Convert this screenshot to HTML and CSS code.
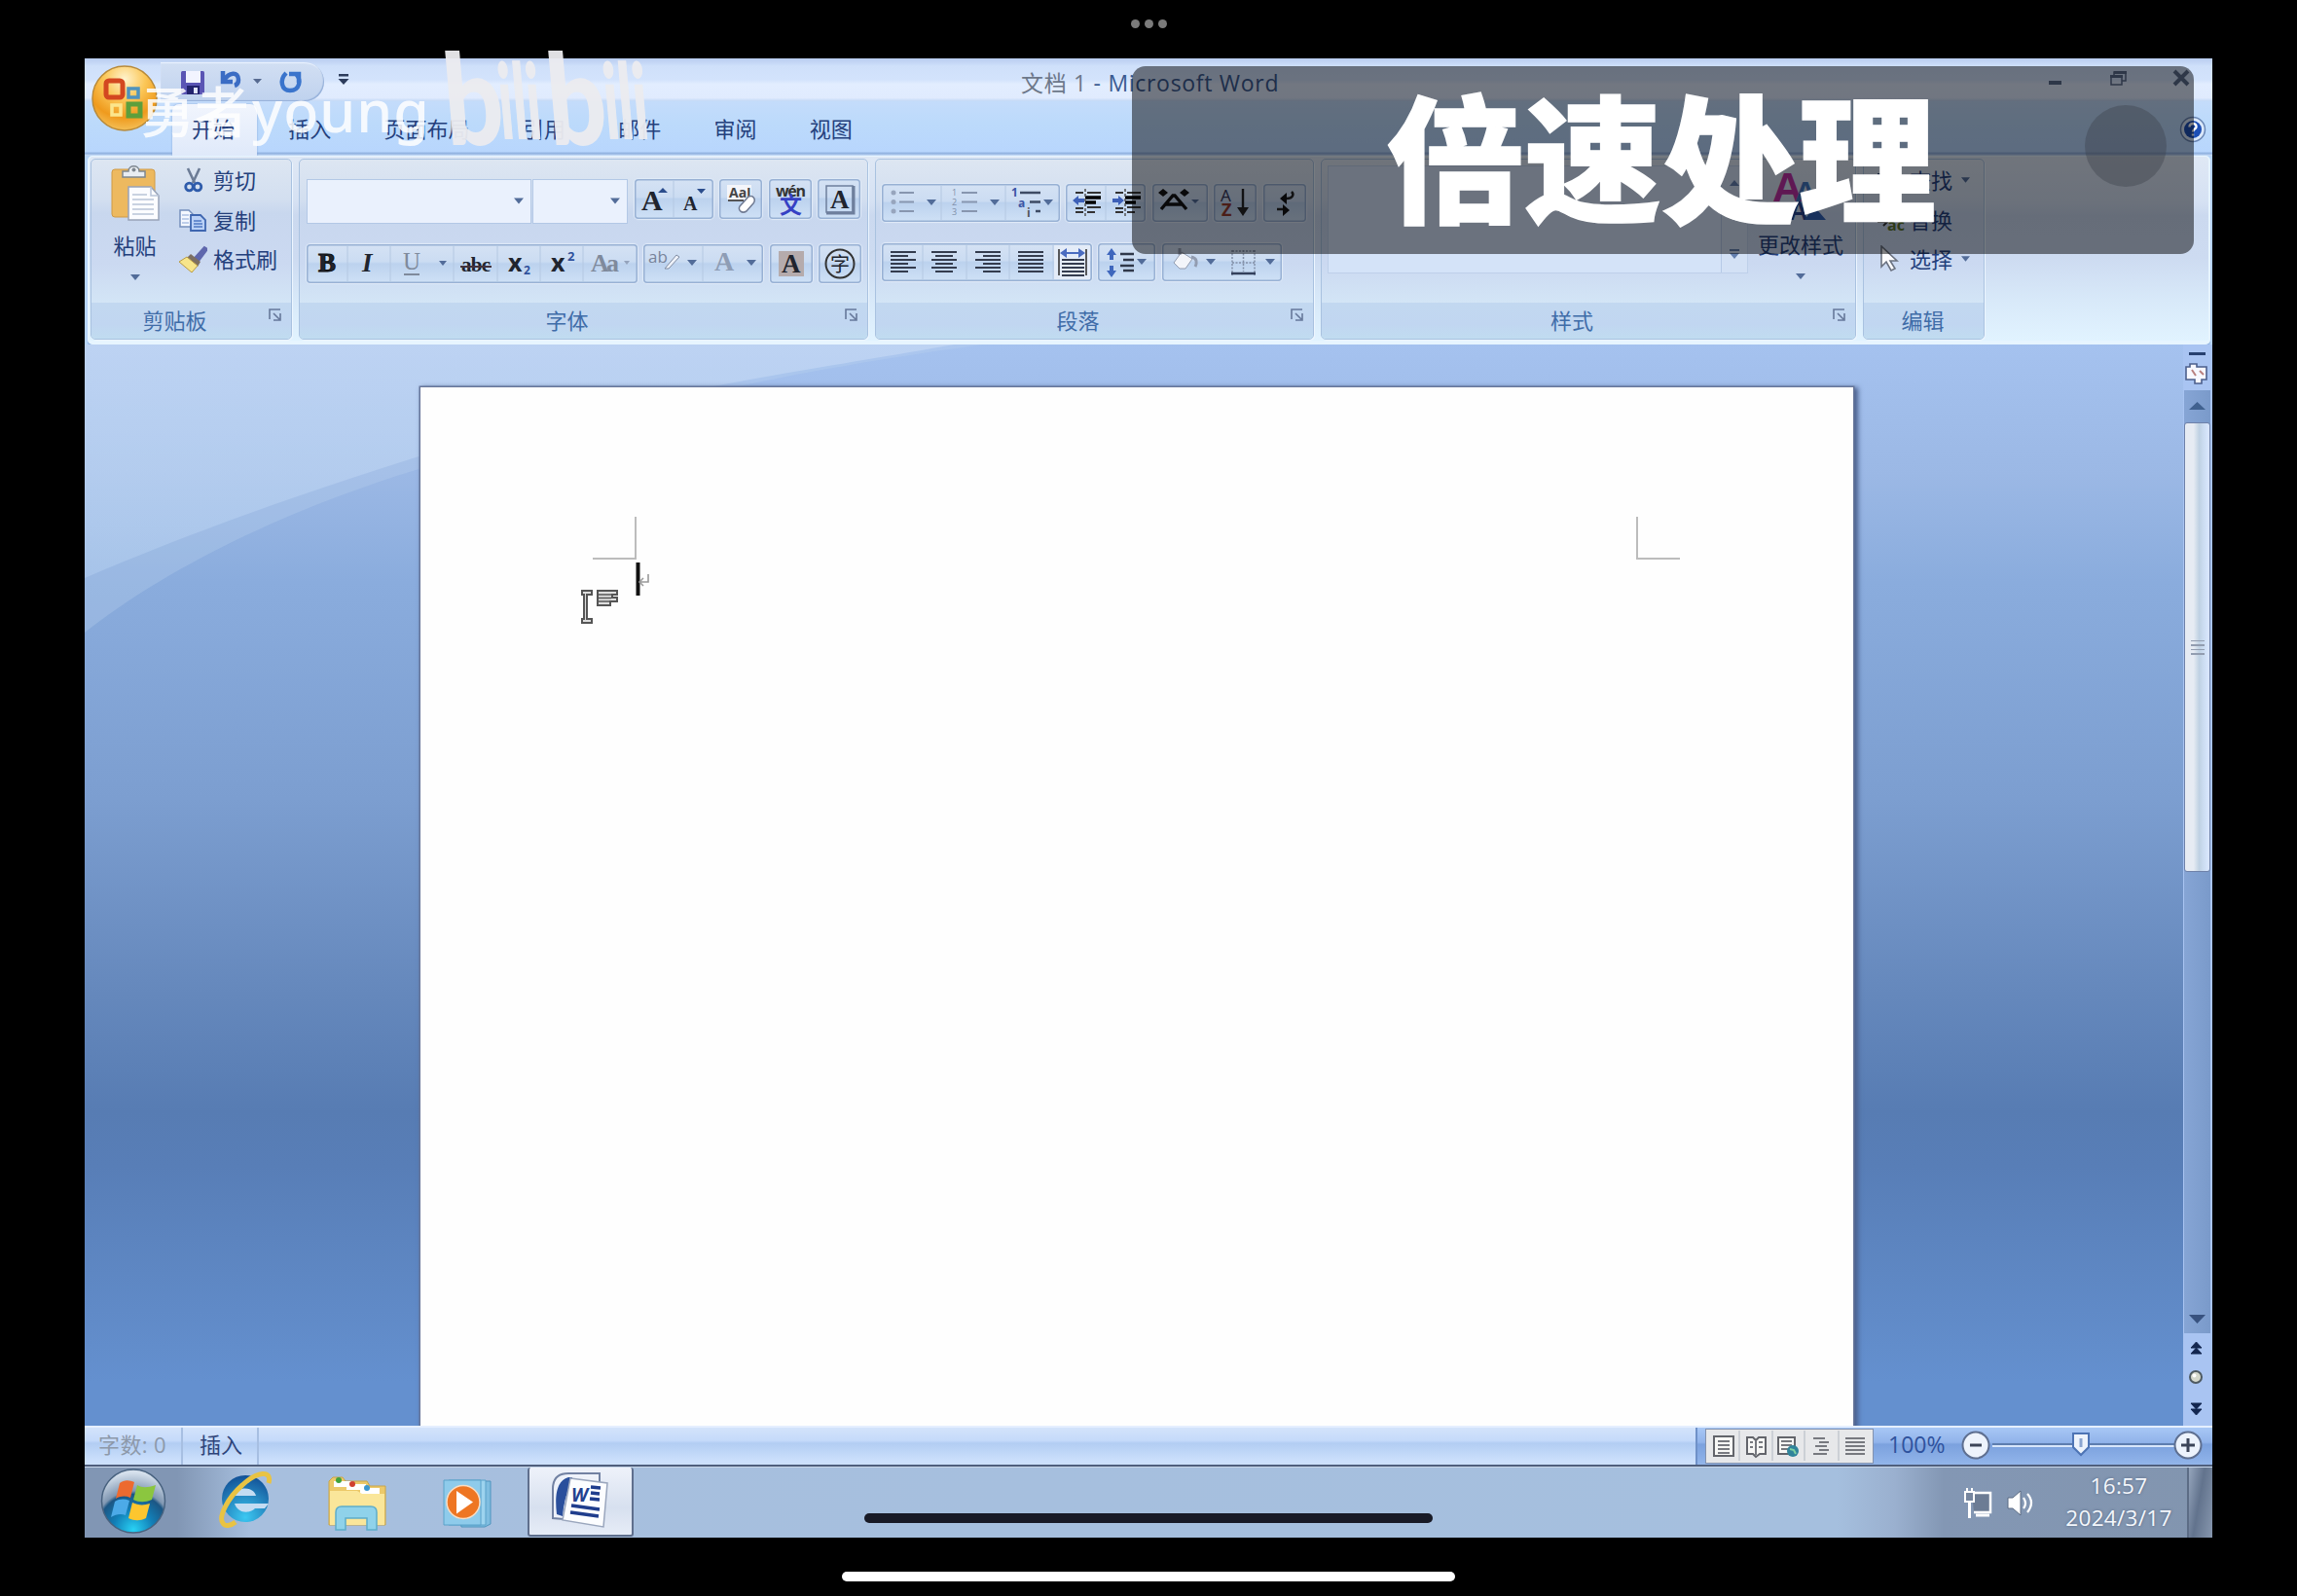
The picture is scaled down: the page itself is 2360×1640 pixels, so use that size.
FILE: index.html
```html
<!DOCTYPE html>
<html lang="zh-CN">
<head>
<meta charset="utf-8">
<title>文档 1 - Microsoft Word</title>
<link rel="stylesheet" href="styles.css">
</head>
<body>
<div class="tablet-top"><i></i><i></i><i></i></div>

<main class="desktop">
  <header class="titlebar">
    <div class="qat">
      <svg viewBox="165 64 168 40" width="168" height="40">
        <rect x="186" y="73" width="24" height="24" rx="1.5" fill="#5a55b4"/><rect x="191" y="73" width="15" height="12" fill="#f2f4ff"/><rect x="192" y="88" width="13" height="9" fill="#23246e"/><rect x="199" y="90" width="4" height="6" fill="#dfe4ff"/>
        <path d="M229 73v11h10M230 83c5-9 15-10 15-1 0 3-1 5-4 6" fill="none" stroke="#3a6cc4" stroke-width="4.5"/>
        <path d="M260 81h9l-4.500 5z" fill="#566a90"/>
        <path d="M294 75c-7 7-5 18 4 18 10 0 12-11 6-17M297 76h10v9" fill="none" stroke="#3a74cc" stroke-width="4.500"/>
      </svg>
    </div>
    <svg class="qat-more" viewBox="346 74 14 16" width="14" height="16"><path d="M348 77h10v2.500h-10zM347.500 82h11l-5.500 6z" fill="#2d3c5c"/></svg>
    <h1 class="title"><span>文档 1</span> - Microsoft Word</h1>
    <svg class="winbtns" viewBox="2100 68 155 24" width="155" height="24">
      <path d="M2105 83h13v4h-13z" fill="#5b6c8c"/>
      <path d="M2169 79h11v8h-11zM2172 78v-4h12v9h-4" fill="none" stroke="#5b6c8c" stroke-width="1.500"/><path d="M2168 77h13v3h-13zM2172 73h13v3h-13z" fill="#5b6c8c"/>
      <path d="M2234 73l14 14M2248 73l-14 14" stroke="#5b6c8c" stroke-width="4"/>
    </svg>
  </header>

  <nav class="tabs">
    <span class="tab active">开始</span><span class="tab">插入</span><span class="tab">页面布局</span><span class="tab">引用</span><span class="tab">邮件</span><span class="tab">审阅</span><span class="tab">视图</span>
    <svg class="help" viewBox="0 0 28 28" width="28" height="28"><circle cx="14" cy="14" r="12.500" fill="#dbe8fa" stroke="#6a86b4" stroke-width="1.500"/><circle cx="14" cy="14" r="9" fill="#1d4fb5"/><path d="M10.500 11.500c0-5 7.500-4.500 7 0-.3 2-3.500 2.500-3.500 5M14 18.500v2" stroke="#fff" stroke-width="2.400" fill="none"/></svg>
  </nav>

  <section class="ribbon">
    <div class="group g-clip">
      <div class="body">
        <div class="paste">
          <svg viewBox="112 168 56 62" width="56" height="62">
            <rect x="116" y="175" width="44" height="49" rx="3" fill="#edb95f" stroke="#cf9a47"/><path d="M127 183v-6h6c0-7 11-7 11 0h6v6z" fill="#e9edf2" stroke="#7e8790" stroke-width="1.500"/><circle cx="138.500" cy="175.500" r="2" fill="#7e8790"/>
            <path d="M133 193h23l8 9v25h-31z" fill="#fbfcff" stroke="#98a3b8" stroke-width="1.500"/><path d="M156 193v9h8M137 201h15M137 206h22M137 211h22M137 216h22M137 221h22" fill="none" stroke="#b9c4d8" stroke-width="1.500"/>
          </svg>
          <span>粘贴</span>
          <svg class="drop" viewBox="0 0 10 6" width="10" height="6"><path d="M0 0h10L5 6z"/></svg>
        </div>
        <div class="cmds">
          <div><svg viewBox="184 172 30 28" width="30" height="28"><path d="M194 174l7 15M206 174l-7 15" stroke="#6c7c96" stroke-width="2.600"/><circle cx="195.500" cy="193" r="3.800" fill="none" stroke="#2f5cab" stroke-width="2.800"/><circle cx="204" cy="193" r="3.800" fill="none" stroke="#2f5cab" stroke-width="2.800"/></svg><span>剪切</span></div>
          <div><svg viewBox="184 213 30 28" width="30" height="28"><path d="M186 217h9l4 4v13h-13z" fill="#f4f8ff" stroke="#7690bd" stroke-width="1.500"/><path d="M188 222h7M188 226h7M188 230h7" stroke="#88a5d5"/><path d="M197 222h10l5 5v11h-15z" fill="#b9d0f6" stroke="#3e66b0" stroke-width="1.800"/><path d="M200 228h8M200 231h9M200 234h9" stroke="#4f78c4" stroke-width="1.500"/></svg><span>复制</span></div>
          <div><svg viewBox="184 253 30 28" width="30" height="28"><path d="M211 255l3 2-9 12-4-3z" fill="#5f67ad" stroke="#5f67ad" stroke-width="2"/><path d="M197 262l10 8-3 5-11-9z" fill="#7c6f62"/><path d="M193 265l11 9-6 7-13-11z" fill="#f7e58b" stroke="#b99b44"/></svg><span>格式刷</span></div>
        </div>
      </div>
      <footer><span>剪贴板</span><svg class="launch" viewBox="0 0 16 16" width="16" height="16"><path d="M2 12V2h11" /><path d="M6 6l6 6M13 6v7H6"/></svg></footer>
    </div>

    <div class="group g-font">
      <div class="body">
        <div class="row r1">
          <div class="combo c1"><svg class="drop" viewBox="0 0 10 6" width="10" height="7"><path d="M0 0h10L5 6z"/></svg></div>
          <div class="combo c2"><svg class="drop" viewBox="0 0 10 6" width="10" height="7"><path d="M0 0h10L5 6z"/></svg></div>
          <svg class="box" viewBox="653 184 81 41" width="81" height="41"><g class="serif" font-weight="bold"><text x="660" y="216" font-size="30" >A</text><text x="703" y="216" font-size="20">A</text></g><path d="M677 198h10l-5-5zM717 194h9l-4.500 5z" fill="#2a4c8c"/><path class="sep" d="M693 186v37"/></svg>
          <svg class="box" viewBox="741 184 44 41" width="44" height="41"><rect x="749" y="190" width="25" height="15" fill="#f4f5fa"/><text x="751" y="203" font-size="14" font-weight="bold" fill="#444">AaI</text><path d="M750 206h16" stroke="#555" stroke-width="2"/><path d="M762 212l9-10c5-2 8 3 5 7l-7 8c-5 3-9-1-7-5z" fill="#fff" stroke="#6f7a92" stroke-width="1.500"/></svg>
          <svg class="box" viewBox="791 184 44 41" width="44" height="41"><text x="798" y="202" font-size="16" font-weight="bold" fill="#333" textLength="31">wén</text><text class="cjk" x="802" y="219" font-size="23" font-weight="bold" fill="#3541c4">文</text></svg>
          <svg class="box" viewBox="841 184 44 41" width="44" height="41"><path d="M850 191h27v27h-27z" fill="none" stroke="#6e7f9d" stroke-width="1.500"/><path d="M850 219h28v-28" fill="none" stroke="#6e7f9d" stroke-width="3"/><text class="serif" x="854" y="214" font-size="27" font-weight="bold">A</text></svg>
        </div>
        <div class="row r2">
          <svg class="box" viewBox="315 251 340 40" width="340" height="40">
            <path class="sep" d="M357 253v36M401 253v36M466 253v36M511 253v36M555 253v36M599 253v36"/>
            <g class="serif"><text x="327" y="279" font-size="27" font-weight="bold" stroke="#111" stroke-width="1">B</text><text x="372" y="279" font-size="27" font-weight="bold" font-style="italic">I</text><g fill="#7f8a9c"><text x="414" y="277" font-size="25">U</text><text x="607" y="279" font-size="26" font-weight="bold" textLength="29">Aa</text></g><text x="474" y="279" font-size="21" font-weight="bold" textLength="30">abc</text></g>
            <path d="M415 282h16" stroke="#7f8a9c" stroke-width="2"/><path d="M473 274h32" stroke="#43333d" stroke-width="2"/>
            <text x="522" y="279" font-size="25" font-weight="bold">x</text><text x="538" y="282" font-size="12" font-weight="bold" fill="#2f519c">2</text><text x="566" y="279" font-size="25" font-weight="bold">x</text><text x="583" y="268" font-size="13" font-weight="bold" fill="#2f519c">2</text>
            <path class="dd" d="M451 268h8l-4 5z"/><path class="dl" d="M641 268h6l-3 4z"/>
          </svg>
          <svg class="box" viewBox="662 251 123 40" width="123" height="40"><path class="sep" d="M723 253v36"/><text x="667" y="270" font-size="17" fill="#77839a">ab</text><path d="M684 276l12-14 3 2-11 12z" fill="#eef2fa" stroke="#7f8ba1"/><text class="serif" x="735" y="278" font-size="28" fill="#8e9db5" font-weight="bold">A</text><path class="dd" d="M707 267h10l-5 6zM768 267h10l-5 6z"/></svg>
          <svg class="box" viewBox="791 251 44 40" width="44" height="40"><rect x="800" y="258" width="26" height="26" fill="#b5abac"/><text class="serif" x="803" y="280" font-size="27" font-weight="bold">A</text></svg>
          <svg class="box" viewBox="841 251 44 40" width="44" height="40"><circle cx="863" cy="271" r="14.500" fill="none" stroke="#333" stroke-width="2"/><text class="cjk" x="853" y="278.500" font-size="20">字</text></svg>
        </div>
      </div>
      <footer><span>字体</span><svg class="launch" viewBox="0 0 16 16" width="16" height="16"><path d="M2 12V2h11" /><path d="M6 6l6 6M13 6v7H6"/></svg></footer>
    </div>

    <div class="group g-para">
      <div class="body">
        <div class="row r1">
          <svg class="box" viewBox="906 189 183 39" width="183" height="39">
            <path d="M924 198h15M924 207.500h15M924 217h15M988 198h16M988 207.500h16M988 217h16" stroke="#8796af" stroke-width="2.200"/><circle cx="918" cy="198" r="2.500" fill="#97a5bd"/><circle cx="918" cy="207.500" r="2.500" fill="#97a5bd"/><circle cx="918" cy="217" r="2.500" fill="#97a5bd"/>
            <g font-size="9" fill="#8090aa"><text x="978" y="201">1</text><text x="978" y="211">2</text><text x="978" y="221">3</text></g>
            <path class="sep" d="M967 191v35M1033 191v35"/><path d="M1048 198h21M1058 207.500h11M1064 217h5" stroke="#3e4b64" stroke-width="2.400"/><g font-size="12" font-weight="bold" fill="#3b55a5"><text x="1039" y="202">1</text><text x="1046" y="213">a</text><text x="1055" y="223" fill="#555">i</text></g>
            <path class="dd" d="M952 205h10l-5 6zM1017 205h10l-5 6zM1072 205h10l-5 6z"/>
          </svg>
          <svg class="box" viewBox="1096 189 82 39" width="82" height="39">
            <g id="indent"><path d="M1106 198h8M1118 198h14M1106 214h8M1118 213h14M1106 218h8M1118 218h8" stroke="#333" stroke-width="2"/><path d="M1116 203h16M1116 208h11" stroke="#000" stroke-width="3.500"/><path d="M1116 194v28" stroke="#555" stroke-dasharray="3 2" stroke-width="1.500"/></g>
            <use href="#indent" x="41"/><path d="M1103 206l6-5v3h6v4h-6v3zM1156 206l-6-5v3h-6v4h6v3z" fill="#3d60b8"/><path class="sep" d="M1137 191v35"/>
          </svg>
          <svg class="box" viewBox="1185 189 57 39" width="57" height="39"><path d="M1194 215l12-14h2l12 14M1199 210h16" fill="none" stroke="#111" stroke-width="3.400"/><path d="M1191 198l5-4 5 4-5 4zM1213 198l5-4 5 4-5 4z" fill="#111"/><path class="dd" d="M1225 205h8l-4 4z"/></svg>
          <svg class="box" viewBox="1249 189 44 39" width="44" height="39"><text x="1256" y="207" font-size="17" fill="#335">A</text><text x="1257" y="222" font-size="18" font-weight="bold" fill="#943a2c">Z</text><path d="M1279 194v21" stroke="#222" stroke-width="2.400"/><path d="M1273 213h12l-6 9z" fill="#222"/></svg>
          <svg class="box" viewBox="1299 189 44 39" width="44" height="39"><path d="M1328 197c3 3 1 7-5 7h-5M1313 215h8" fill="none" stroke="#222" stroke-width="2.500"/><path d="M1316 204l7-6v12zM1326 216l-7-6v12z" fill="#111"/></svg>
        </div>
        <div class="row r2">
          <svg class="box" viewBox="906 250 216 39" width="216" height="39">
            <path d="M915 259h26M915 263h18M915 267h26M915 271h18M915 275h26M915 279h18M957 259h26M961 263h18M957 267h26M961 271h18M957 275h26M961 279h18M1002 259h26M1010 263h18M1002 267h26M1010 271h18M1002 275h26M1010 279h18M1046 259h26M1046 263h26M1046 267h26M1046 271h26M1046 275h26M1046 279h26" stroke="#343c4e" stroke-width="2"/>
            <rect x="1083" y="252" width="37" height="35" fill="#e4ecf8"/><path d="M1088 256v27M1116 256v27" stroke="#333" stroke-width="1.600"/><path d="M1091 267h23M1091 271h23M1091 275h23M1091 279h23M1091 283h23" stroke="#343c4e" stroke-width="2"/><path d="M1089 260l7-5v4h12v-4l7 5-7 5v-4h-12v4z" fill="#4a6cc0"/>
            <path class="sep" d="M948 252v35M993 252v35M1037 252v35M1082 252v35"/>
          </svg>
          <svg class="box" viewBox="1128 250 59 39" width="59" height="39"><path d="M1142 255l5 7h-3v5h-4v-5h-3zM1142 285l5-7h-3v-5h-4v5h-3z" fill="#3f67bd"/><path d="M1151 261h14M1154 267h11M1151 273h14M1154 278h11" stroke="#30384a" stroke-width="2.300"/><path class="dd" d="M1168 266h10l-5 6z"/></svg>
          <svg class="box" viewBox="1194 250 123 39" width="123" height="39"><path d="M1206 270l8-11 11 7-7 10h-6z" fill="#f3f5fa" stroke="#929cb0"/><path d="M1212 262v-7M1224 264c6 1 6 6 4 10" fill="none" stroke="#929cb0" stroke-width="3"/><path d="M1266 257v26M1277.500 257v22M1289 257v26M1266 258h23M1266 270h23" stroke="#8390a8" stroke-width="1.500" stroke-dasharray="2 1.500"/><path d="M1265 281h25" stroke="#33405c" stroke-width="2.500"/><path class="dd" d="M1239 266h10l-5 6zM1300 266h10l-5 6z"/></svg>
        </div>
      </div>
      <footer><span>段落</span><svg class="launch" viewBox="0 0 16 16" width="16" height="16"><path d="M2 12V2h11" /><path d="M6 6l6 6M13 6v7H6"/></svg></footer>
    </div>

    <div class="group g-style">
      <div class="body">
        <div class="gallery"><div class="scroll"><svg viewBox="0 0 10 6" width="10" height="6"><path d="M0 6h10L5 0z"/></svg><svg viewBox="0 0 10 6" width="10" height="6"><path d="M0 0h10L5 6z"/></svg><svg viewBox="0 0 10 10" width="10" height="10"><path d="M0 0h10v2H0zM0 4h10l-5 6z"/></svg></div></div>
        <div class="change">
          <svg viewBox="1820 170 60 58" width="60" height="58"><g class="sans" font-weight="bold"><text x="1821" y="206" font-size="43" fill="#bd2fa2">A</text><text x="1844" y="206" font-size="30" fill="#3e74bd">A</text><text x="1838" y="225" font-size="27" fill="#27458f">A</text></g><path d="M1854 225l10-14 12 14z" fill="#2f60b4"/></svg>
          <span>更改样式</span>
          <svg class="drop" viewBox="0 0 10 6" width="10" height="6"><path d="M0 0h10L5 6z"/></svg>
        </div>
      </div>
      <footer><span>样式</span><svg class="launch" viewBox="0 0 16 16" width="16" height="16"><path d="M2 12V2h11" /><path d="M6 6l6 6M13 6v7H6"/></svg></footer>
    </div>

    <div class="group g-edit">
      <div class="body cmds">
        <div><svg viewBox="0 0 30 28" width="30" height="28"><path d="M3 22V8h8v14zM16 22V8h8v14zM10 10h7" fill="#2c4472" stroke="#2c4472" stroke-width="2"/></svg><span>查找</span><svg class="drop" viewBox="0 0 10 6" width="9" height="6"><path d="M0 0h10L5 6z"/></svg></div>
        <div><svg viewBox="0 0 30 28" width="30" height="28"><path d="M3 5v11h8M8 12l4 4-4 4" fill="none" stroke="#333" stroke-width="2"/><text x="12" y="25" font-size="16" font-weight="bold" fill="#5b742e">ac</text></svg><span>替换</span></div>
        <div><svg viewBox="0 0 30 28" width="30" height="28"><path d="M6 1v21l5-5 5 9 4-2-5-8h7z" fill="#fdfdff" stroke="#6b7280" stroke-width="1.600"/></svg><span>选择</span><svg class="drop" viewBox="0 0 10 6" width="9" height="6"><path d="M0 0h10L5 6z"/></svg></div>
      </div>
      <footer><span>编辑</span></footer>
    </div>
  </section>

  <section class="workspace">
    <svg class="swoosh" viewBox="87 354 2156 1111" width="2156" height="1111">
      <defs><linearGradient id="sw" x1="0" y1="0" x2="0" y2="1"><stop offset="0" stop-color="#c6d9f5" stop-opacity=".65"/><stop offset="1" stop-color="#bcd6f4" stop-opacity=".38"/></linearGradient></defs>
      <path d="M87 354H1010C880 372 700 400 427 483 290 525 170 585 87 650z" fill="#bcd4f0" opacity=".3"/>
      <path d="M87 354H980C850 378 640 405 427 470 300 510 190 550 87 594z" fill="url(#sw)"/>
    </svg>
    <article class="page">
      <div class="margins"><i class="crop left"></i><i class="crop right"></i></div>
      <svg class="cursor" viewBox="590 576 84 68" width="84" height="68">
        <path d="M655.500 578v34" stroke="#111" stroke-width="4"/><path d="M666 590v8h-8M661 594l-4 4 4 4" fill="none" stroke="#999" stroke-width="1.600"/>
        <path d="M598 607h10v4h-5v25h5v4h-10v-4h2v-25h-2zM614 607h20v4h-5v3h5v4h-7v4h-13z" fill="#ddd" stroke="#555" stroke-width="2"/><path d="M614 611h15M614 614.500h14M614 618h13" stroke="#555" stroke-width="1.500"/>
      </svg>
    </article>
    <aside class="scrollbar">
      <svg viewBox="2243 354 30 47" width="30" height="47"><path d="M2249 362h17v3h-17z" fill="#27406f"/><path d="M2246 377h4v-3h7v3h10v13h-5v4h-7v-4h-9z" fill="#f7f8ff" stroke="#4c5f8c" stroke-width="1.600"/><path d="M2252 380l4 6M2260 381l4 4" stroke="#b8817f" stroke-width="2"/></svg>
      <div class="track">
        <svg viewBox="0 0 27 33" width="27" height="33"><path d="M5 20h17l-8.500-8z" fill="#40618f"/></svg>
        <div class="thumb"><i></i><i></i><i></i><i></i></div>
        <svg class="down" viewBox="0 0 27 30" width="27" height="30"><path d="M5 11h17l-8.500 9z" fill="#38527f"/></svg>
      </div>
      <svg viewBox="2243 1370 30 95" width="30" height="95"><path d="M2251 1385h11l-5.500-6zM2251 1391h11l-5.500-6zM2251 1442h11l-5.500 6zM2251 1448h11l-5.500 6z" fill="#13264f" stroke="#13264f"/><circle cx="2256" cy="1415" r="6" fill="#d5d8cc" stroke="#4e5a62" stroke-width="2"/><circle cx="2254.500" cy="1413.500" r="2" fill="#fff"/></svg>
    </aside>
  </section>

  <footer class="status">
    <span class="count">字数: 0</span><span class="mode">插入</span>
    <div class="zoom">
      <svg class="views" viewBox="1754 1469 171 34" width="171" height="34">
        <path d="M1788 1470v31M1822 1470v31M1855 1470v31M1890 1470v31" stroke="#c4c8d0" stroke-width="1.500"/>
        <g fill="#f7f7f5" stroke="#63656b" stroke-width="2"><path d="M1762 1476h20v20h-20z"/><path d="M1796 1477h6l3 3 3-3h7v17h-6l-4 3-3-3h-6z"/><path d="M1828 1477h17v17h-17z"/></g>
        <path d="M1766 1481h12M1766 1485h12M1766 1489h12M1766 1493h12M1805 1480v15M1799 1482h3M1799 1487h3M1808 1482h4M1808 1487h4M1831 1481h11M1831 1485h11M1831 1489h8M1864 1478h12M1870 1482h10M1866 1486h12M1870 1490h10M1864 1494h14M1897 1478h20M1897 1482h20M1897 1486h20M1897 1490h20M1897 1494h20" stroke="#77797f" stroke-width="2"/>
        <circle cx="1843" cy="1491" r="6" fill="#30849b"/><path d="M1840 1489l4 1 2 4" stroke="#7ed0a3" stroke-width="2" fill="none"/>
      </svg>
      <span class="pct">100%</span>
      <svg class="slider" viewBox="2014 1467 252 36" width="252" height="36">
        <path d="M2048 1484h187" stroke="#52709f" stroke-width="1.500"/><path d="M2048 1486h187" stroke="#d8e6fb" stroke-width="2"/>
        <g fill="#edf3fc" stroke="#5e6f90" stroke-width="2"><circle cx="2031" cy="1485" r="13.500"/><circle cx="2249" cy="1485" r="13.500"/><path d="M2131 1473h16v14l-8 8-8-8z" stroke="#4d74b5"/></g>
        <path d="M2025 1485h12M2242 1485h14M2249 1478v14" stroke="#3c4558" stroke-width="3"/><path d="M2139 1478v9" stroke="#8aa5d0" stroke-width="3"/>
      </svg>
    </div>
  </footer>

  <footer class="taskbar">
    <svg class="orb" viewBox="103 1508 68 69" width="68" height="69">
      <defs><radialGradient id="orb" cx=".5" cy=".95" r=".9"><stop offset="0" stop-color="#29d2f5"/><stop offset=".35" stop-color="#127fb7"/><stop offset=".62" stop-color="#1c5684"/><stop offset=".68" stop-color="#8097b2"/><stop offset="1" stop-color="#d5e0ec"/></radialGradient></defs>
      <circle cx="137" cy="1542.500" r="32.500" fill="url(#orb)" stroke="#48627f" stroke-width="1.500"/>
      <path d="M123 1524c5-4 10-3 15-1l-4 16c-5-2-10-2-15 1z" fill="#ed6a30"/><path d="M141 1526c5 3 10 3 19 0l-4 15c-7 3-13 3-19 0z" fill="#8bc63f"/><path d="M118 1543c5-3 10-3 15-1l-4 15c-5-2-10-1-15 2z" fill="#4caae8"/><path d="M136 1544c6 3 12 3 18 1l-4 15c-6 3-12 3-18 0z" fill="#fdc62f"/>
    </svg>
    <svg class="ie" viewBox="222 1510 62 64" width="62" height="64">
      <defs><radialGradient id="ieg" cx=".5" cy=".9" r=".9"><stop offset="0" stop-color="#3cc8f2"/><stop offset="1" stop-color="#125096"/></radialGradient></defs>
      <circle cx="254" cy="1540" r="24" fill="url(#ieg)"/><path d="M243 1537c2-10 20-10 22 0zM243 1545h35l-4 5h-10c-6 6-18 5-21-5z" fill="#c4dcf2"/>
      <path d="M278 1524c4-14-12-12-27 2-15 13-25 33-20 39 2 4 8 3 13-1" fill="none" stroke="#e9c343" stroke-width="5"/>
    </svg>
    <svg class="folder" viewBox="334 1514 66 62" width="66" height="62">
      <path d="M338 1522l4-4h10l3 4h22l3 5h16v40h-58z" fill="#ecc96a" stroke="#c9a549"/><path d="M343 1522h20v6h-20zM356 1525h20v6h-20zM370 1529h20v6h-20z" fill="#fff"/><circle cx="348" cy="1521" r="3" fill="#40a23d"/><circle cx="362" cy="1525" r="3" fill="#d0402f"/><circle cx="377" cy="1529" r="3" fill="#3b97d0"/>
      <path d="M339 1532h28l5 3h23v32h-56z" fill="#fae69a"/><path d="M345 1572v-18q0-6 6-6h30q6 0 6 6v18h-10v-12h-22v12z" fill="#8fd2ea" stroke="#5eadca" stroke-width="1.500"/>
    </svg>
    <svg class="wmp" viewBox="453 1518 58 54" width="58" height="54">
      <path d="M466 1522h38v44l-6 3h-24z" fill="#7fbde0" stroke="#4e94bd"/><path d="M461 1521h38v46h-38z" fill="#9dd3ee" stroke="#5aa2ca"/><path d="M456 1521h38v46h-38z" fill="#8ecbeb" stroke="#5aa2ca"/><circle cx="476" cy="1543.500" r="17" fill="#ee7623" stroke="#f8ddc4" stroke-width="1.500"/><path d="M469 1532l17 11.500-17 12z" fill="#fff"/>
    </svg>
    <div class="taskbtn">
      <svg viewBox="564 1511 64 60" width="64" height="60">
        <path d="M568 1560v-30q0-16 16-16h32v9h-20q-12 2-13 14l-4 24z" fill="#eef2fa" stroke="#7282a3" stroke-width="2"/><path d="M572 1556c-2-18-1-34 12-38h4c-5 14-9 26-10 40z" fill="#2a4f9c"/>
        <path d="M586 1519l38 5-4 45-42-7z" fill="#fcfdff" stroke="#9aa6bd" stroke-width="1.500"/>
        <text x="587" y="1543" font-size="19" font-weight="bold" font-style="italic" fill="#23418f">W</text><path d="M607 1528l10 1M607 1534l9 1M606 1540l10 1M587 1547l29 4M586 1554l29 4" stroke="#1f3d8d" stroke-width="3.400"/>
      </svg>
    </div>
    <svg class="tray" viewBox="2016 1527 76 36" width="76" height="36">
      <path d="M2027 1534h19v20h-17" fill="#6c7c94" stroke="#fff" stroke-width="2.500"/><path d="M2020 1533h9v10h-9zM2022 1529v4M2027 1529v4" stroke="#fff" stroke-width="2" fill="#76869f"/><path d="M2024.500 1543v17M2031 1557h14" stroke="#fff" stroke-width="3"/>
      <path d="M2064 1539h5l8-7v25l-8-7h-5z" fill="#fff" stroke="#5b6b83"/><path d="M2080 1539q4 6 0 11M2084 1535q8 9 0 19" fill="none" stroke="#fff" stroke-width="2.200"/>
    </svg>
    <div class="clock"><span>16:57</span><span>2024/3/17</span></div>
    <div class="showdesk"></div>
  </footer>

  <svg class="office" viewBox="94 66 68 70" width="68" height="70">
    <defs><radialGradient id="off" cx=".5" cy=".2" r=".8"><stop offset="0" stop-color="#fff3ce"/><stop offset=".4" stop-color="#fbc758"/><stop offset=".75" stop-color="#ef9a1d"/><stop offset="1" stop-color="#f4bf57"/></radialGradient></defs>
    <circle cx="128" cy="101" r="33" fill="url(#off)" stroke="#b88a3a" stroke-width="1.500"/>
    <rect x="109" y="83" width="17" height="17" rx="3" fill="none" stroke="#d34720" stroke-width="5"/><rect x="132" y="91" width="10" height="9" fill="none" stroke="#4f93bd" stroke-width="3.500"/><rect x="115" y="108" width="9" height="10" fill="none" stroke="#fbe68d" stroke-width="3.500"/><rect x="132" y="107" width="12" height="12" fill="none" stroke="#5c9f3c" stroke-width="5"/>
  </svg>
  <div class="watermark"><span>勇者</span><span class="latin">young</span></div>
  <svg class="brand" viewBox="450 50 226 104" width="226" height="104">
    <g class="mark" transform="translate(456 148) skewX(5)">
      <text x="4" y="0" font-size="128" textLength="60" lengthAdjust="spacingAndGlyphs">b</text><text x="60" y="-6" font-size="106" textLength="43" lengthAdjust="spacingAndGlyphs">ili</text><text x="110" y="0" font-size="128" textLength="60" lengthAdjust="spacingAndGlyphs">b</text><text x="168" y="-6" font-size="106" textLength="45" lengthAdjust="spacingAndGlyphs">ili</text>
    </g>
  </svg>
  <div class="banner"><strong>倍速处理</strong><i></i></div>
  <div class="inner-home"></div>
</main>

<div class="home"></div>
</body>
</html>
```
FILE: styles.css
```css
* { box-sizing: border-box; }
body {
  margin: 0; width: 2360px; height: 1640px; overflow: hidden; background: #000;
  font-family: "Open Sans", "Noto Sans CJK SC", sans-serif; color: #24407c; font-size: 22px; line-height: 28px;
}
svg { display: block; flex: none; }
svg text { font-family: "Open Sans", sans-serif; }
.serif text, text.serif { font-family: "Liberation Serif", serif; }
.sans text { font-family: "Liberation Sans", sans-serif; }
svg text.cjk { font-family: "Noto Sans CJK SC", sans-serif; }
span { white-space: nowrap; }

.tablet-top { height: 60px; display: flex; justify-content: center; gap: 5px; padding: 20px 0 0 0; }
.tablet-top i { width: 9px; height: 9px; border-radius: 50%; background: #7b7b7b; }
.home { width: 630px; height: 10px; margin: 35px auto 0; border-radius: 5px; background: #fff; }

.desktop { position: relative; width: 2186px; height: 1520px; margin-left: 87px; background: #b7d5fa; display: flex; flex-direction: column; }

.titlebar { height: 44px; flex: none; display: flex; align-items: flex-start; padding: 4px 18px 0 78px; background: linear-gradient(#b9cdf0 0, #cfe0fa 8px, #d3e3fc 50%, #e2edff 60%, #e0ebfe 92%, #c3d8f6); }
.qat { width: 168px; height: 40px; border-radius: 0 20px 20px 0; background: linear-gradient(#d2dff3, #bfd2ee); box-shadow: inset -1px -1px 1px #94afd9, inset 0 1px 1px #edf4ff; }
.qat-more { margin: 9px 0 0 13px; }
.title { margin: 6px 0 0 689px; font-size: 23px; font-weight: 400; line-height: 30px; letter-spacing: .7px; color: #3b5a90; white-space: nowrap; }
.title span { color: #6c7789; }
.winbtns { margin: 4px 0 0 auto; }

.tabs { height: 56px; flex: none; display: flex; align-items: flex-start; padding: 3px 6px 0 90px; background: linear-gradient(#c4dcfb, #bcdafb 40%, #b8d6fd 92%, #8fb0de 96%, #cfe2fb); }
.tab { margin-top: 11px; margin-left: 54.300px; }
.tab.active { margin: 0 -22px 0 0; width: 87px; height: 54px; padding: 11px 0 0 20px; border-radius: 7px 7px 0 0; background: linear-gradient(#f1f5fd, #dfe9fa); box-shadow: 0 0 2px #7f9fd0; }
.help { margin: 12px 0 0 auto; }

.ribbon { height: 194px; flex: none; display: flex; gap: 7px; padding: 2px 3px 0 4px; margin: 0 2px 0 3px; border: solid #e7f5ff; border-width: 1px 2px 4px; border-radius: 5px; background: linear-gradient(#dfe8f5, #d5e1f3 25%, #cbd9ef 32%, #cddbf1 55%, #d8e9f9 78%, #e1f3ff); box-shadow: 0 2px 1px #8fb0dc; }
.group { height: 186px; flex: none; display: flex; flex-direction: column; border: 1.500px solid #a9c2e0; border-radius: 5px; overflow: hidden; background: linear-gradient(#dde6f2, #d3dff0 22%, #c8d7ee 30%, #cbd9f1 58%, #d3e5f6 80%); box-shadow: 1px 1px 0 #edf6ff; }
.group footer { height: 37px; margin-top: auto; display: flex; justify-content: center; position: relative; padding: 4px 34px 0 0; color: #3f6ca8; background: linear-gradient(#c2d8f0, #c1d6f1 60%, #c0dcf0); }
.g-edit footer { padding-right: 2px; }
.launch { position: absolute; right: 8px; top: 5px; }
.launch path { fill: none; stroke: #66789a; stroke-width: 1.600; }
.body { flex: 1; display: flex; }
.drop path { fill: #526c99; }
.dd { fill: #526c99; }
.dl { fill: #94a3bc; }
.sep { fill: none; stroke: #b4c8e2; stroke-width: 1; }
.g-clip { width: 207px; margin-left: -3px; }
.g-font { width: 585px; }
.g-para { width: 451px; }
.g-style { width: 550px; }
.g-edit { width: 125px; }
.g-font .body, .g-para .body { flex-direction: column; }

.paste { width: 89px; display: flex; flex-direction: column; align-items: center; padding-top: 3px; }
.paste span { margin: 9px 0 16px; }
.g-clip .cmds div { gap: 6px; }
.cmds { flex-direction: column; padding-top: 7px; }
.cmds div { height: 28px; display: flex; align-items: center; gap: 7px; margin-bottom: 12.500px; }
.g-edit .cmds { padding-left: 12px; }
.g-edit .cmds div { gap: 5px; }
.g-edit .cmds .drop { margin-left: 4px; }

.row { display: flex; gap: 6.400px; }
.box { border-radius: 4px; background: linear-gradient(#d5e2f4, #cbdcf2 45%, #bcd2ee 50%, #cfe1f6); box-shadow: inset 0 0 0 1.500px #98b1d4, 0 0 1px 1px #e1ebf8; fill: #20242e; }
.g-font .row { padding-left: 7px; }
.g-font .r1 { padding-top: 19.500px; height: 86.500px; }
.g-para .row { padding-left: 6px; }
.g-para .r1 { padding-top: 24.500px; height: 85.500px; }
.combo { height: 46px; border: 1.500px solid #b3c8e6; background: #eaf1fd; display: flex; align-items: center; justify-content: flex-end; }
.c1 { width: 231px; padding-right: 7px; margin-right: -5px; }
.c2 { width: 98px; padding-right: 7px; }

.gallery { width: 432px; height: 111px; margin: 6px 0 0 6px; border: 1px solid #bed0ea; background: #d4e3f8; display: flex; justify-content: flex-end; }
.scroll { width: 27px; border-left: 1px solid #b5c9e6; background: #d3e1f5; display: flex; flex-direction: column; align-items: center; justify-content: space-between; padding: 14px 0; fill: #6480b0; }
.change { width: 108px; display: flex; flex-direction: column; align-items: center; padding-top: 7px; }
.change span { margin: 8px 0 16px; }

.workspace { position: relative; height: 1111px; flex: none; overflow: hidden; display: flex; background: linear-gradient(#a5c2ef 0, #9bb8e5 12%, #8aacdd 22%, #7c9ed0 42%, #6588bc 60%, #577cb3 71%, #587eb7 76%, #6490cf 96%); }
.swoosh { position: absolute; left: 0; top: 0; }
.page { position: relative; width: 1472px; margin: 44px 0 0 345px; background: #fefefe; box-shadow: 0 0 0 1.500px #67769a, 3px 2px 5px 2px #4a5f8c; }
.margins { display: flex; justify-content: space-between; padding: 133px 178px 0 177px; }
.crop { width: 45px; height: 44px; border: solid #bcbcbc; }
.crop.left { border-width: 0 2px 2px 0; }
.crop.right { border-width: 0 0 2px 2px; }
.cursor { position: absolute; left: 158px; top: 178px; }
.scrollbar { position: relative; width: 30px; margin-left: auto; background: #a9c4f2; }
.track { height: 969px; margin: 0 2px 0 1px; display: flex; flex-direction: column; background: linear-gradient(90deg, #86a5d5, #7a9aca); }
.thumb { height: 462px; border: 1.500px solid #6e81a9; border-radius: 3px; background: linear-gradient(90deg, #e6ebf3 35%, #bfd1e3 58%, #cbdcf1 75%, #dbe8ff); display: flex; flex-direction: column; gap: 3px; justify-content: center; align-items: center; }
.thumb i { width: 14px; height: 1.500px; background: #929db0; }
.down { margin-top: auto; }

.status { height: 42px; flex: none; display: flex; border-top: 2px solid #e5efff; border-bottom: 2px solid #4f5f7d; background: linear-gradient(#d3e3fb, #c5dafa 35%, #b2cdf3 42%, #cce0fc 90%); line-height: 35px; }
.count { width: 101px; padding-left: 14px; color: #8d99aa; border-right: 2px solid #a7bfe2; letter-spacing: .4px; }
.mode { width: 78px; padding-left: 17px; border-right: 2px solid #a7bfe2; color: #2d4379; }
.zoom { margin-left: auto; width: 531px; display: flex; padding-left: 9px; border-left: 2px solid #6f91c8; background: linear-gradient(#a8c7f5, #91b3ea 40%, #7ba1de 45%, #92b5ea); }
.views { outline: 1px solid #8392ae; background: #e7e8ea; margin-top: 2px; }
.pct { width: 60px; margin-left: 16px; color: #2f529d; font-size: 23px; }
.slider { margin-left: 13px; }

.taskbar { flex: 1; display: flex; align-items: flex-start; border-top: 1px solid #c8d6e8; background: linear-gradient(90deg, #8196b4 0, #8196b4 95px, #a7bfde 170px, #a5bfde 1800px, #9ab0cf 1860px, #8397b4 1910px, #8295af 100%); }
.orb { margin: 0 0 0 16px; }
.ie { margin: 2px 0 0 49px; }
.folder { margin: 6px 0 0 52px; }
.wmp { margin: 10px 0 0 53px; }
.taskbtn { width: 109px; height: 71px; margin-left: 31px; padding: 3px 0 0 20px; border: 2px solid #5f6f8d; border-width: 0 2px 2px; border-radius: 3px; background: linear-gradient(#eef2fa, #d7e0ef 60%, #e6ecf7); }
.tray { margin: 19px 0 0 auto; }
.clock { width: 140px; margin: 2px 0 0 16px; display: flex; flex-direction: column; align-items: center; color: #f4f7fc; line-height: 33px; font-size: 22.500px; letter-spacing: .3px; text-shadow: 0 0 3px #52637e; }
.showdesk { width: 26px; height: 72px; border-left: 2px solid #5c6c85; background: linear-gradient(100deg, #95a5bc, #62738d 45%, #8797ae); }

.office { position: absolute; left: 7px; top: 6px; }
.watermark { position: absolute; left: 57px; top: 16px; display: flex; align-items: baseline; font-size: 56px; line-height: 74px; font-weight: 500; color: #fff; opacity: .85; }
.latin { font-size: 59px; letter-spacing: 1px; margin-left: 3px; font-family: "Noto Sans", sans-serif; }
.brand { position: absolute; left: 363px; top: -10px; overflow: visible; opacity: .95; }
.mark { fill: #ececf0; stroke: #ececf0; stroke-width: 2; }
.mark text { font-family: Lato, sans-serif; font-weight: bold; }
.banner { position: absolute; left: 1076px; top: 8px; width: 1091px; height: 193px; border-radius: 14px; background: rgba(2, 2, 4, .5); color: #fff; padding-left: 262px; }
.banner strong { display: block; margin-top: -6px; font-family: "Noto Sans CJK SC", sans-serif; font-size: 141px; line-height: 190px; font-weight: 900; -webkit-text-stroke: 1.500px #fff; white-space: nowrap; }
.banner i { position: absolute; left: 979px; top: 40px; width: 84px; height: 84px; border-radius: 50%; background: rgba(60, 64, 76, .4); }
.inner-home { position: absolute; left: 801px; top: 1495px; width: 584px; height: 10px; border-radius: 5px; background: #181a26; }
```
